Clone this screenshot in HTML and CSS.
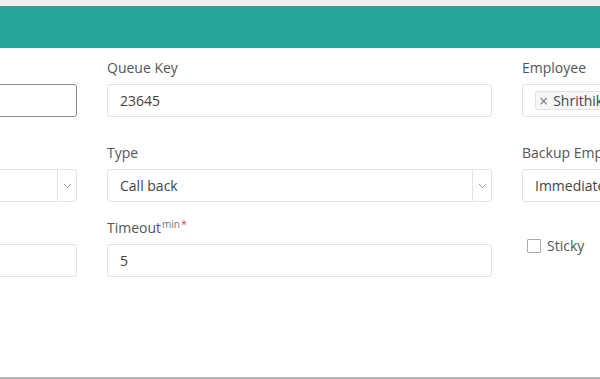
FILE: index.html
```html
<!DOCTYPE html>
<html>
<head>
<meta charset="utf-8">
<link rel="stylesheet" href="styles.css">
</head>
<body>
<div class="card">
  <div class="card-header"></div>
  <div class="card-body">
    <div class="form">
      <div class="field row1">
        <label class="lbl"></label>
        <div class="input focus"></div>
      </div>
      <div class="field row1">
        <label class="lbl">Queue Key</label>
        <div class="input">23645</div>
      </div>
      <div class="field row1">
        <label class="lbl">Employee</label>
        <div class="input"><span class="chip"><span class="chip-x">×</span>Shrithika</span></div>
      </div>

      <div class="field">
        <label class="lbl"></label>
        <div class="input select"><span class="val"></span><span class="arrow"><svg width="9" height="6" viewBox="0 0 9 6"><path d="M1 1 L4.5 4.5 L8 1" fill="none" stroke="#a0a0a0" stroke-width="1"/></svg></span></div>
      </div>
      <div class="field">
        <label class="lbl">Type</label>
        <div class="input select"><span class="val">Call back</span><span class="arrow"><svg width="9" height="6" viewBox="0 0 9 6"><path d="M1 1 L4.5 4.5 L8 1" fill="none" stroke="#a0a0a0" stroke-width="1"/></svg></span></div>
      </div>
      <div class="field">
        <label class="lbl">Backup Employee</label>
        <div class="input select"><span class="val">Immediate</span><span class="arrow"><svg width="9" height="6" viewBox="0 0 9 6"><path d="M1 1 L4.5 4.5 L8 1" fill="none" stroke="#a0a0a0" stroke-width="1"/></svg></span></div>
      </div>

      <div class="field">
        <label class="lbl"></label>
        <div class="input"></div>
      </div>
      <div class="field">
        <label class="lbl">Timeout<span class="sup">min<span class="req">*</span></span></label>
        <div class="input">5</div>
      </div>
      <div class="field check-field">
        <label class="check"><span class="box"></span>Sticky</label>
      </div>
    </div>
  </div>
</div>
</body>
</html>
```
FILE: styles.css
```css
html, body {
  margin: 0;
  padding: 0;
}
body {
  width: 600px;
  height: 379px;
  overflow: hidden;
  background: #eef0f3;
  font-family: "Open Sans", "Noto Sans", sans-serif;
  color: #555;
}
.card {
  margin-top: 6px;
  height: 373px;
  box-sizing: border-box;
  background: #fff;
  border-bottom: 2px solid #b4b4b4;
  overflow: hidden;
}
.card-header {
  height: 42px;
  background: #27a599;
}
.card-body {
  padding-top: 11px;
}
.form {
  display: grid;
  grid-template-columns: 385px 385px 385px;
  column-gap: 30px;
  row-gap: 17px;
  margin-left: -308px;
}
.field.row1 {
  margin-bottom: 10px;
}
.lbl {
  display: block;
  font-size: 14px;
  line-height: 18px;
  height: 18px;
  margin-bottom: 7px;
  color: #555;
  white-space: nowrap;
}
.sup {
  font-size: 10px;
  line-height: 0;
  vertical-align: 5px;
  color: #777;
  margin-left: 1px;
}
.req {
  color: #d0453f;
  font-size: 11px;
  margin-left: 1px;
}
.input {
  height: 33px;
  box-sizing: border-box;
  border: 1px solid #e3e3e3;
  border-radius: 3px;
  padding: 0 12px;
  font-size: 14px;
  color: #444;
  display: flex;
  align-items: center;
  white-space: nowrap;
  overflow: hidden;
}
.input.focus {
  border-color: #8c8c8c;
}
.input.select {
  padding-right: 0;
}
.select .val {
  flex: 1;
}
.select .arrow {
  width: 18px;
  height: 100%;
  border-left: 1px solid #e3e3e3;
  display: flex;
  align-items: center;
  justify-content: center;
}
.chip {
  display: inline-flex;
  align-items: center;
  height: 19px;
  box-sizing: border-box;
  border: 1px solid #e2e2e2;
  background: #f7f7f7;
  border-radius: 2px;
  padding: 0 4px 0 3px;
  font-size: 14px;
  color: #444;
  margin-left: 0;
}
.chip-x {
  color: #777;
  font-size: 16px;
  line-height: 16px;
  margin-right: 5px;
}
.check-field {
  padding-top: 19px;
  padding-left: 5px;
}
.check {
  display: flex;
  align-items: center;
  font-size: 14px;
  color: #555;
  line-height: 16px;
}
.box {
  width: 14px;
  height: 14px;
  box-sizing: border-box;
  border: 1px solid #aaa;
  border-radius: 1px;
  margin-right: 6px;
  background: #fff;
}
```
